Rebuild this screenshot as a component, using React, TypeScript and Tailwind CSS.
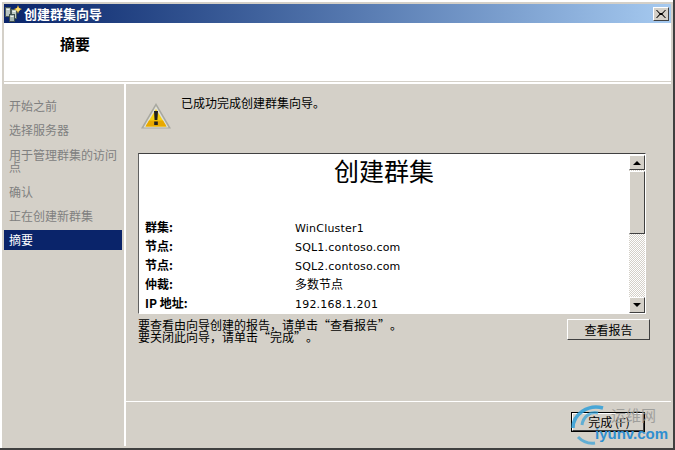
import React from "react";

function Raised({ className = "", children }: { className?: string; children?: React.ReactNode }) {
  return (
    <div className={`border border-t-white border-l-white border-r-[#404040] border-b-[#404040] bg-[#d4d0c8] ${className}`}>
      {children}
    </div>
  );
}

function Row({ label, value, cjkValue }: { label: string; value: string; cjkValue?: boolean }) {
  return (
    <div className="flex h-[19px] items-center text-[12px] leading-[19px] text-black">
      <div className="w-[150px] font-bold font-['Noto_Sans_CJK_SC',sans-serif]">{label}</div>
      <div className={cjkValue ? "font-['Noto_Sans_CJK_SC',sans-serif]" : "pt-[3px] font-['DejaVu_Sans',sans-serif] text-[11px] tracking-[0.2px]"}>{value}</div>
    </div>
  );
}

function Nav({ children, className = "" }: { children: React.ReactNode; className?: string }) {
  return <div className={`px-[5px] py-[6px] text-[12px] leading-[12px] text-[#808080] ${className}`}>{children}</div>;
}

function OpenQuote() {
  return <span className="inline-block w-[12px] text-right">“</span>;
}
function CloseQuote() {
  return <span className="inline-block w-[12px] text-left">”</span>;
}

export default function App() {
  return (
    <div className="relative flex h-[450px] w-[675px] flex-col overflow-hidden border-b-2 border-r-2 border-b-[#404040] border-r-[#404040] bg-[#d4d0c8] font-['Noto_Sans_CJK_SC',sans-serif]">
      <div className="flex min-h-0 flex-1 flex-col border-l-2 border-t-2 border-l-white border-t-white p-[2px]">
        {/* Title bar */}
        <div className="flex h-[19px] shrink-0 items-center bg-gradient-to-r from-[#0a246a] to-[#a6caf0] pl-px pr-[2px]">
          <svg width="17" height="17" viewBox="0 0 17 17" className="shrink-0">
            <rect x="0.500" y="2.500" width="5" height="9" fill="#b8c4c0" stroke="#4a5a5a" />
            <rect x="1.500" y="4" width="3" height="1" fill="#f0f4f0" />
            <rect x="6.500" y="4.500" width="5" height="9" fill="#c0ccc4" stroke="#4a5a5a" />
            <rect x="7.500" y="6" width="3" height="1" fill="#f0f4f0" />
            <rect x="4.500" y="9.500" width="5" height="7" fill="#a8b8b0" stroke="#3f5050" />
            <rect x="5.500" y="11" width="3" height="1" fill="#f0f4f0" />
            <path d="M13 0l1 3 3 1-3 1.500-1 3.500-1-3.500-3-1.500 3-1z" fill="#f8c030" />
            <circle cx="13" cy="4.500" r="2" fill="#fde070" />
          </svg>
          <span className="ml-[2px] text-[13px] font-bold leading-none text-white">创建群集向导</span>
          <div className="ml-auto flex h-[14px] w-4 items-center justify-center border border-b-[#404040] border-l-white border-r-[#404040] border-t-white bg-[#d4d0c8]">
            <svg width="10" height="8" viewBox="0 0 10 8">
              <path d="M1 0l3 3h2l3-3h1L6.500 4 10 8H9L6 5H4L1 8H0l3.500-4L0 0z" fill="#000" />
            </svg>
          </div>
        </div>

        {/* Header */}
        <div className="flex h-[58px] shrink-0 items-center bg-white pb-[17px] pl-[56px]">
          <span className="text-[15px] font-bold leading-none text-black">摘要</span>
        </div>
        <div className="h-px shrink-0 bg-[#d4d0c8]" />
        <div className="h-[2px] shrink-0 bg-white" />

        {/* Body */}
        <div className="flex min-h-0 flex-1">
          <div className="flex w-[118px] shrink-0 flex-col pt-[10px]">
            <Nav>开始之前</Nav>
            <Nav>选择服务器</Nav>
            <Nav className="my-px">用于管理群集的访问点</Nav>
            <Nav>确认</Nav>
            <Nav>正在创建新群集</Nav>
            <div className="mt-[2px] flex h-5 items-center bg-[#0a246a] px-[5px] text-[12px] leading-[12px] text-white">摘要</div>
          </div>
          <div className="ml-[2px] w-[2px] shrink-0 bg-white" />
          <div className="flex min-w-0 flex-1 flex-col">
            <div className="flex min-h-0 flex-1 flex-col pl-[12px] pr-[25px] pt-[13px]">
              <div className="flex h-[56px] shrink-0 pl-[3px]">
                <svg width="30" height="26" viewBox="0 0 30 26" className="mt-[6px] shrink-0">
                  <path d="M15 0L30 25.500H0z" fill="#a8a8a0" />
                  <path d="M15 3L27.500 24.500H2.500z" fill="#e0e0d8" />
                  <path d="M15 6L25.500 23.500H4.500z" fill="#f8d010" />
                  <path d="M4.500 23.500h21l-3.500-6H8z" fill="#e8a800" />
                  <path d="M13 8h4l-.6 9h-2.800z" fill="#202020" />
                  <rect x="13.200" y="18.500" width="3.600" height="3.500" fill="#202020" />
                </svg>
                <div className="ml-[10px] text-[12px] leading-[12px] text-black">已成功完成创建群集向导。</div>
              </div>

              {/* Report */}
              <div className="flex h-[161px] shrink-0 border border-b-white border-l-[#606060] border-r-white border-t-[#404040] bg-white">
                <div className="min-w-0 flex-1 overflow-hidden px-[6px]">
                  <div className="h-[63px] text-center text-[25px] leading-[32px] text-black">创建群集</div>
                  <Row label="群集:" value="WinCluster1" />
                  <Row label="节点:" value="SQL1.contoso.com" />
                  <Row label="节点:" value="SQL2.contoso.com" />
                  <Row label="仲裁:" value="多数节点" cjkValue />
                  <Row label="IP 地址:" value="192.168.1.201" />
                </div>
                <div className="mt-px flex w-[16px] shrink-0 flex-col bg-[repeating-conic-gradient(#d4d0c8_0_25%,#ffffff_0_50%)] bg-[length:2px_2px]">
                  <Raised className="flex h-[15px] shrink-0 items-center justify-center">
                    <svg width="8" height="4" viewBox="0 0 8 4"><path d="M4 0l4 4H0z" fill="#000" /></svg>
                  </Raised>
                  <Raised className="mt-px h-[63px] shrink-0" />
                  <div className="flex-1" />
                  <Raised className="flex h-[16px] shrink-0 items-center justify-center">
                    <svg width="8" height="4" viewBox="0 0 8 4"><path d="M0 0h8L4 4z" fill="#000" /></svg>
                  </Raised>
                </div>
              </div>

              {/* Below report */}
              <div className="mt-[5px] flex shrink-0 items-start justify-between">
                <div className="text-[12px] leading-[12px] text-black">
                  <div>要查看由向导创建的报告，请单击<OpenQuote />查看报告<CloseQuote />。</div>
                  <div>要关闭此向导，请单击<OpenQuote />完成<CloseQuote />。</div>
                </div>
                <Raised className="flex h-[21px] w-[83px] shrink-0 -mr-[4px] items-center justify-center text-[12px] leading-none text-black">查看报告</Raised>
              </div>
            </div>

            <div className="h-px shrink-0 bg-white" />
            <div className="flex h-[44px] shrink-0 justify-end pr-[26px] pt-[10px]">
              <div className="h-[20px] w-[74px] border border-black">
                <Raised className="flex h-full w-full items-center justify-center pl-[2px] text-[12px] leading-none text-black">完成 (F)</Raised>
              </div>
            </div>
          </div>
        </div>
      </div>

      {/* Watermark */}
      <div className="pointer-events-none absolute left-[570px] top-[402px] h-[48px] w-[105px]">
        <svg width="60" height="48" viewBox="0 0 60 48" className="absolute left-0 top-0">
          <path d="M3 26C3 12 18 2 33 6" fill="none" stroke="#2f9fd8" strokeWidth="3.500" opacity="0.85" />
          <path d="M12 23C13 15 20 9 28 11" fill="none" stroke="#2f9fd8" strokeWidth="3" opacity="0.7" />
          <path d="M8 35C12 39 18 42 25 41" fill="none" stroke="#2f9fd8" strokeWidth="3" opacity="0.7" />
        </svg>
        <span className="absolute left-[41px] top-[5px] text-[15px] leading-none text-[#9a9a98] opacity-90">运维网</span>
        <span className="absolute left-[25px] top-[23px] font-['Liberation_Sans',sans-serif] text-[15px] font-bold leading-[18px] text-[#2f8fd0]">iyunv.com</span>
      </div>
    </div>
  );
}
